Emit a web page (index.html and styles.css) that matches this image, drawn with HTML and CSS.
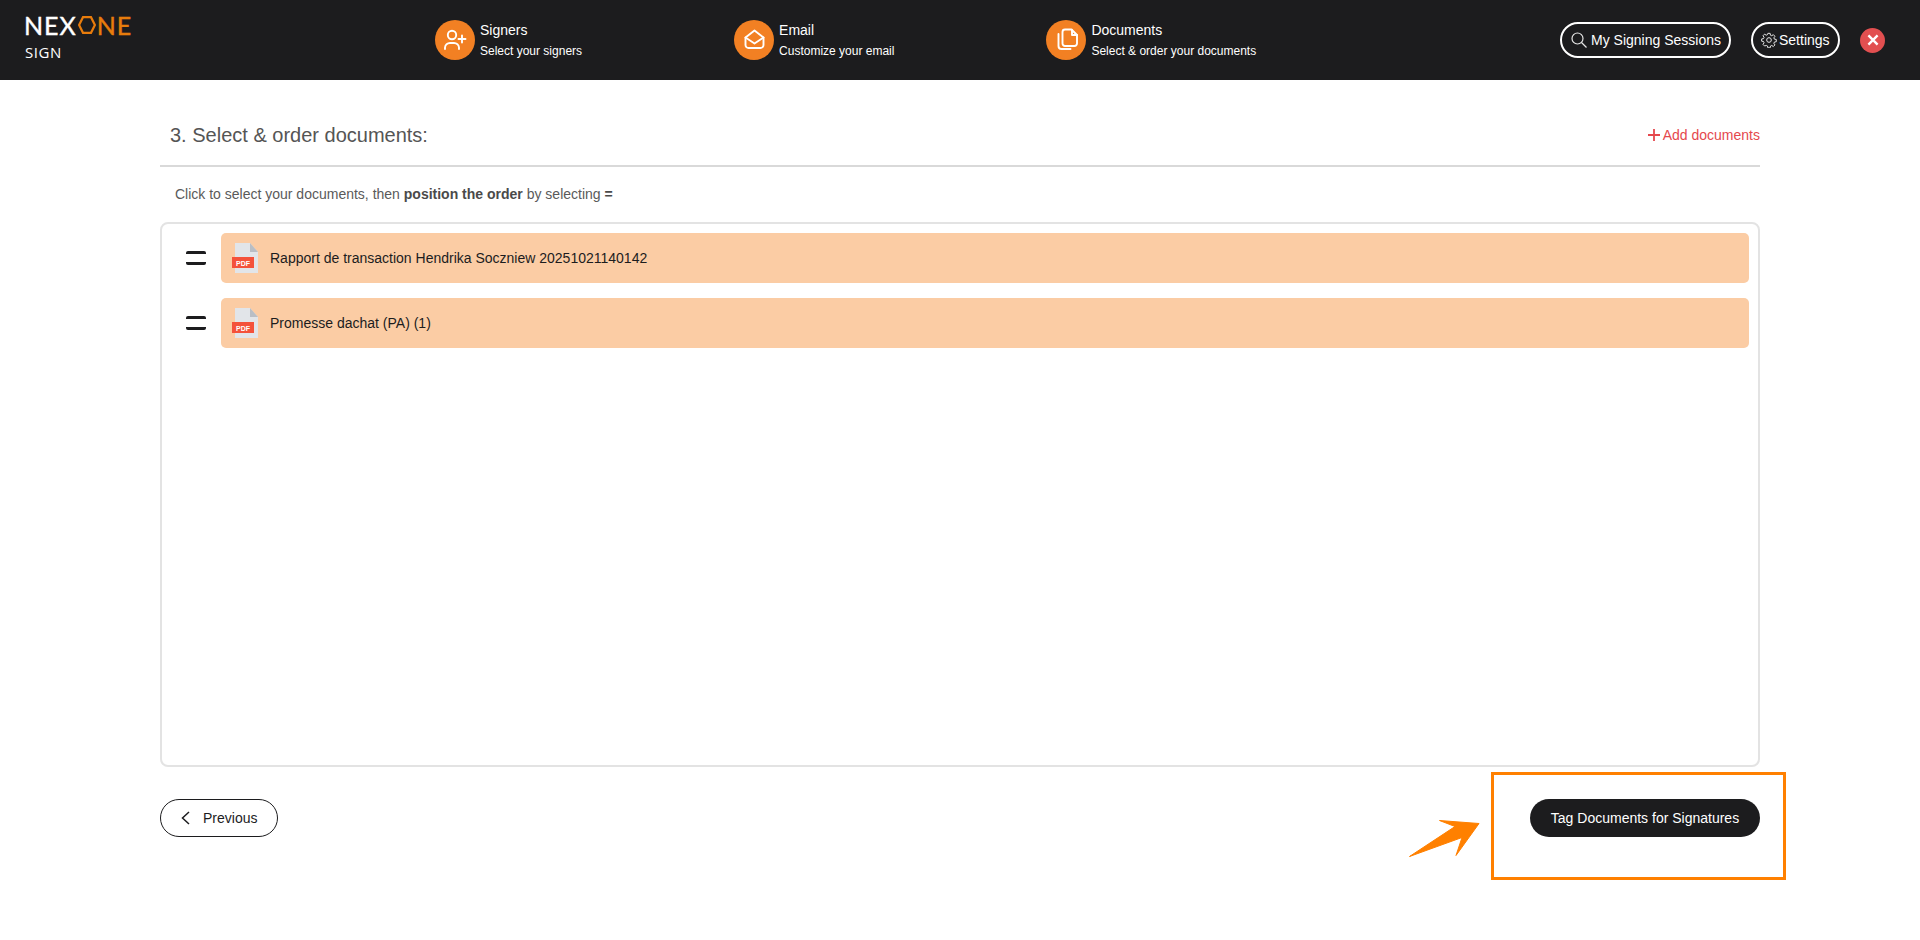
FILE: index.html
```html
<!DOCTYPE html>
<html lang="en">
<head>
<meta charset="utf-8">
<title>Nexone Sign</title>
<link rel="stylesheet" href="styles.css">
</head>
<body>
<header class="topbar">
  <div class="logo">
    <div class="logo-main"><span>NEX</span><svg class="logo-hex" viewBox="0 0 18 18"><path d="M5 1.200h8L16.900 9 13 16.800H5L1.100 9z"/></svg><span class="logo-orange">NE</span></div>
    <div class="logo-sub">SIGN</div>
  </div>
  <nav class="steps">
    <div class="step">
      <span class="step-icon"><svg viewBox="0 0 40 40"><circle cx="17" cy="15" r="4.200"/><path d="M10 29v-1.500a5 5 0 0 1 5-4.500h4a5 5 0 0 1 5 4.500V29"/><path d="M27 15.500v7M23.500 19h7"/></svg></span>
      <div><div class="step-title">Signers</div><div class="step-sub">Select your signers</div></div>
    </div>
    <div class="step">
      <span class="step-icon"><svg viewBox="0 0 40 40"><path d="M11.500 17.500 20.500 10.500 29.500 17.500V25a3 3 0 0 1-3 3h-12a3 3 0 0 1-3-3z"/><path d="M11.500 17.500 20.500 23.500 29.500 17.500"/></svg></span>
      <div><div class="step-title">Email</div><div class="step-sub">Customize your email</div></div>
    </div>
    <div class="step">
      <span class="step-icon"><svg viewBox="0 0 40 40"><path d="M19 9.500h6.500l5.500 5.500v8.500a2.500 2.500 0 0 1-2.500 2.500H19a2.500 2.500 0 0 1-2.500-2.500V12a2.500 2.500 0 0 1 2.500-2.500z"/><path d="M26 10v5h5"/><path d="M12.500 14v12a3 3 0 0 0 3 3h9"/></svg></span>
      <div><div class="step-title">Documents</div><div class="step-sub">Select &amp; order your documents</div></div>
    </div>
  </nav>
  <div class="actions">
    <button class="pill pill-search"><svg class="pill-icon" viewBox="0 0 16 16"><circle cx="6.500" cy="6.500" r="5.500"/><path d="M10.500 10.500 15.500 15.500"/></svg>My Signing Sessions</button>
    <button class="pill pill-settings"><svg class="pill-icon" viewBox="0 0 24 24"><circle cx="12" cy="12" r="3.500"/><path d="M10.300 2h3.400l.5 2.800 1.900.8 2.400-1.600 2.400 2.400-1.600 2.400.8 1.900 2.800.5v3.400l-2.800.5-.8 1.900 1.600 2.400-2.400 2.400-2.400-1.600-1.900.8-.5 2.800h-3.400l-.5-2.800-1.900-.8L5.400 21l-2.400-2.400 1.600-2.400-.8-1.900-2.800-.5v-3.400l2.800-.5.8-1.900L3 5.600 5.400 3.200 7.800 4.800l1.900-.8z"/></svg>Settings</button>
    <button class="close" aria-label="Close"><svg viewBox="0 0 24 24"><path d="M7 7l10 10M17 7 7 17"/></svg></button>
  </div>
</header>

<main class="page">
  <div class="title-row">
    <h1 class="title">3. Select &amp; order documents:</h1>
    <a class="add-link"><svg viewBox="0 0 12 12"><path d="M6 0v12M0 6h12"/></svg>Add documents</a>
  </div>
  <p class="hint">Click to select your documents, then <b>position the order</b> by selecting <b>=</b></p>
  <section class="doc-box">
    <div class="doc-row">
      <span class="grip"></span>
      <div class="doc">
        <svg class="pdf" viewBox="0 0 26 30"><path class="pdf-page" d="M3 0h15l8 9v21H3z"/><path class="pdf-fold" d="M18 0l8 9h-8z"/><rect class="pdf-tag" x="0" y="14" width="22" height="11"/><text class="pdf-text" x="11" y="22.500" text-anchor="middle">PDF</text></svg>
        <span>Rapport de transaction Hendrika Soczniew 20251021140142</span>
      </div>
    </div>
    <div class="doc-row">
      <span class="grip"></span>
      <div class="doc">
        <svg class="pdf" viewBox="0 0 26 30"><path class="pdf-page" d="M3 0h15l8 9v21H3z"/><path class="pdf-fold" d="M18 0l8 9h-8z"/><rect class="pdf-tag" x="0" y="14" width="22" height="11"/><text class="pdf-text" x="11" y="22.500" text-anchor="middle">PDF</text></svg>
        <span>Promesse dachat (PA) (1)</span>
      </div>
    </div>
  </section>
  <div class="footer-row">
    <button class="btn-prev"><svg viewBox="0 0 9 14"><path d="M8 1 1.500 7 8 13"/></svg>Previous</button>
    <button class="btn-next">Tag Documents for Signatures</button>
  </div>
</main>

<div class="callout-box"></div>
<svg class="callout-arrow" viewBox="0 0 72 40"><path d="M70 3.500 30.500 .500 46 6.500 .500 36.500 53 17.500 47 35.500z"/></svg>
</body>
</html>
```

FILE: styles.css
```css
* { box-sizing: border-box; }
html, body { margin: 0; padding: 0; height: 100%; }
body {
  background: #fff;
  font-family: "Liberation Sans", Arial, sans-serif;
  font-size: 14px;
  color: #555;
  position: relative;
  overflow: hidden;
}
button { font-family: inherit; cursor: pointer; }

.topbar {
  height: 80px;
  background: #1c1c1e;
  display: flex;
  align-items: center;
  color: #fff;
}
.logo { width: 435px; padding-left: 24px; padding-bottom: 4px; }
.logo-main {
  display: flex;
  align-items: center;
  font-family: Lato, "Open Sans", sans-serif;
  font-size: 25px;
  line-height: 22px;
  letter-spacing: 1px;
  font-weight: 400;
  -webkit-text-stroke: .4px currentColor;
}
.logo-orange { color: #e87c0c; }
.logo-hex { width: 18px; height: 18px; margin: 0 1px 0 1px; fill: none; stroke: #e87c0c; stroke-width: 2.200; }
.logo-sub { font-family: "Open Sans", sans-serif; font-size: 15px; line-height: 20px; margin-top: 6px; letter-spacing: .6px; padding-left: 1px; }

.steps { display: flex; gap: 152px; }
.step { display: flex; align-items: center; gap: 5px; }
.step-icon {
  width: 40px; height: 40px; border-radius: 50%;
  background: #f28023;
  display: block;
}
.step-icon svg { display: block; width: 40px; height: 40px; fill: none; stroke: #fff; stroke-width: 1.900; stroke-linecap: round; stroke-linejoin: round; }
.step-title { font-size: 14px; line-height: 18px; }
.step-sub { font-size: 12px; line-height: 16px; margin-top: 4px; }

.actions { margin-left: auto; padding-right: 35px; display: flex; align-items: center; }
.pill {
  height: 36px; border: 2px solid #fff; border-radius: 18px;
  background: transparent; color: #fff; font-size: 14px;
  display: flex; align-items: center; padding: 0;
}
.pill-search { width: 171px; padding-left: 9px; gap: 4px; margin-right: 20px; }
.pill-settings { width: 89px; padding-left: 8px; gap: 2px; margin-right: 20px; }
.pill-icon { width: 16px; height: 16px; fill: none; stroke: #e6e6e6; stroke-width: 1.200; }
.pill-settings .pill-icon { stroke-width: 1.500; }
.close {
  width: 25px; height: 25px; border-radius: 50%; border: 0; padding: 0;
  background: #e24f50; display: flex; align-items: center; justify-content: center;
}
.close svg { width: 22px; height: 22px; fill: none; stroke: #fff; stroke-width: 2.600; }

.page { width: 1600px; margin: 0 0 0 160px; }
.title-row {
  height: 87px;
  padding: 25px 0 0 10px;
  border-bottom: 2px solid #d9d9d9;
  display: flex; align-items: center; justify-content: space-between;
}
.title { margin: 0; font-size: 20px; font-weight: 400; color: #555; }
.add-link { color: #e5484d; font-size: 14px; display: flex; align-items: center; gap: 3px; }
.add-link svg { width: 12px; height: 12px; fill: none; stroke: #e5484d; stroke-width: 1.800; }
.hint { margin: 0; padding: 18px 0 0 15px; height: 55px; font-size: 14px; line-height: 18px; color: #5a5a5a; }
.hint b { color: #4a4a4a; }

.doc-box {
  height: 545px;
  border: 2px solid #e3e3e3;
  border-radius: 8px;
  padding: 9px 9px 0 24px;
  display: flex; flex-direction: column; gap: 15px;
}
.doc-row { display: flex; align-items: center; gap: 15px; }
.grip { width: 20px; height: 14px; border-top: 3px solid #1c1c1e; border-bottom: 3px solid #1c1c1e; border-radius: 2px; }
.doc {
  flex: 1; height: 50px;
  background: #fbcca4;
  border-radius: 5px;
  display: flex; align-items: center;
  padding-left: 11px; gap: 12px;
  color: #1c1c1e; font-size: 14px;
}
.pdf { width: 26px; height: 30px; }
.pdf-page { fill: #e2e5e9; }
.pdf-fold { fill: #b9bec5; }
.pdf-tag { fill: #f4523b; }
.pdf-text { fill: #fff; font-size: 7px; font-weight: 700; font-family: "Liberation Sans", sans-serif; }

.footer-row { display: flex; justify-content: space-between; margin-top: 32px; }
.btn-prev, .btn-next { height: 38px; border-radius: 19px; font-size: 14px; display: flex; align-items: center; }
.btn-prev { width: 118px; background: #fff; border: 1px solid #1c1c1e; color: #1c1c1e; padding: 0 0 0 20px; gap: 13px; }
.btn-prev svg { width: 9px; height: 14px; fill: none; stroke: #1c1c1e; stroke-width: 1.500; }
.btn-next { width: 230px; background: #1c1c1e; border: 0; color: #fff; justify-content: center; }

.callout-box { position: absolute; left: 1491px; top: 772px; width: 295px; height: 108px; border: 3px solid #ff8000; }
.callout-arrow { position: absolute; left: 1409px; top: 820px; width: 72px; height: 40px; fill: #ff8000; stroke: #ff8000; stroke-width: 1; stroke-linejoin: round; }
```
